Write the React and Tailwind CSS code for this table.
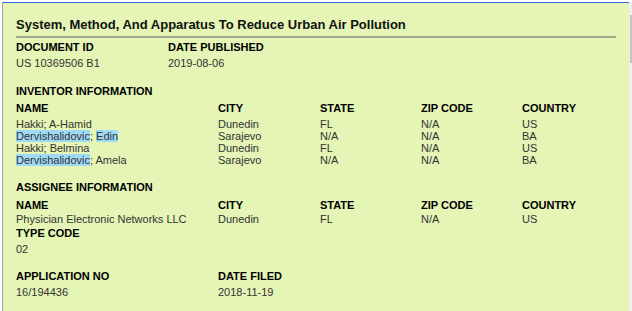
const inventors = [
  { last: 'Hakki', first: 'A-Hamid', city: 'Dunedin', state: 'FL', zip: 'N/A', country: 'US' },
  { last: 'Dervishalidovic', first: 'Edin', city: 'Sarajevo', state: 'N/A', zip: 'N/A', country: 'BA', hlLast: true, hlFirst: true },
  { last: 'Hakki', first: 'Belmina', city: 'Dunedin', state: 'FL', zip: 'N/A', country: 'US' },
  { last: 'Dervishalidovic', first: 'Amela', city: 'Sarajevo', state: 'N/A', zip: 'N/A', country: 'BA', hlLast: true },
];

const cols = 'grid grid-cols-[202px_102px_101px_101px_1fr]';

function Label({ children, className = '' }) {
  return <div className={`text-[11px] leading-[14px] font-bold text-black ${className}`}>{children}</div>;
}

function Value({ children, className = '' }) {
  return <div className={`text-[11px] leading-[12px] text-[#333] ${className}`}>{children}</div>;
}

function Mark({ on, children }) {
  return on ? <span className="bg-[#9ed9f7]">{children}</span> : children;
}

export default function App() {
  return (
    <div className="flex h-[311px] w-[632px] bg-white pt-[2px] pl-[2px] font-['Liberation_Sans',Arial,sans-serif]">
      <div className="flex-1 border-t border-l border-t-[#3568d4] border-l-[#a3a3a3] bg-[#e5f5b5] pl-[13px] pr-[13px]">
        <h1 className="border-b-2 border-[#a4a98a] pt-[14px] pb-[3px] text-[13px] leading-[16px] font-bold text-[#111]">
          System, Method, And Apparatus To Reduce Urban Air Pollution
        </h1>

        <div className="mt-[2px] grid grid-cols-[152px_1fr]">
          <div>
            <Label>DOCUMENT ID</Label>
            <Value className="mt-[3px]">US 10369506 B1</Value>
          </div>
          <div>
            <Label>DATE PUBLISHED</Label>
            <Value className="mt-[3px]">2019-08-06</Value>
          </div>
        </div>

        <Label className="mt-[15px]">INVENTOR INFORMATION</Label>
        <div className={`${cols} mt-[3px]`}>
          <Label>NAME</Label>
          <Label>CITY</Label>
          <Label>STATE</Label>
          <Label>ZIP CODE</Label>
          <Label>COUNTRY</Label>
        </div>
        <div className="mt-[3px]">
          {inventors.map((p, i) => (
            <div key={i} className={cols}>
              <Value>
                <Mark on={p.hlLast}>{p.last}</Mark>; <Mark on={p.hlFirst}>{p.first}</Mark>
              </Value>
              <Value>{p.city}</Value>
              <Value>{p.state}</Value>
              <Value>{p.zip}</Value>
              <Value>{p.country}</Value>
            </div>
          ))}
        </div>

        <Label className="mt-[14px]">ASSIGNEE INFORMATION</Label>
        <div className={`${cols} mt-[4px]`}>
          <Label>NAME</Label>
          <Label>CITY</Label>
          <Label>STATE</Label>
          <Label>ZIP CODE</Label>
          <Label>COUNTRY</Label>
        </div>
        <div className={`${cols} mt-[1px]`}>
          <Value>Physician Electronic Networks LLC</Value>
          <Value>Dunedin</Value>
          <Value>FL</Value>
          <Value>N/A</Value>
          <Value>US</Value>
        </div>
        <Label className="mt-[1px]">TYPE CODE</Label>
        <Value className="mt-[3px]">02</Value>

        <div className="mt-[14px] grid grid-cols-[202px_1fr]">
          <div>
            <Label>APPLICATION NO</Label>
            <Value className="mt-[3px]">16/194436</Value>
          </div>
          <div>
            <Label>DATE FILED</Label>
            <Value className="mt-[3px]">2018-11-19</Value>
          </div>
        </div>
      </div>

      {/* scrollbar strip */}
      <div className="w-[3px] bg-[#efefef] pt-[13px]">
        <div className="ml-[1px] h-[48px] w-[2px] bg-[#c4c4c4]" />
      </div>
    </div>
  );
}
